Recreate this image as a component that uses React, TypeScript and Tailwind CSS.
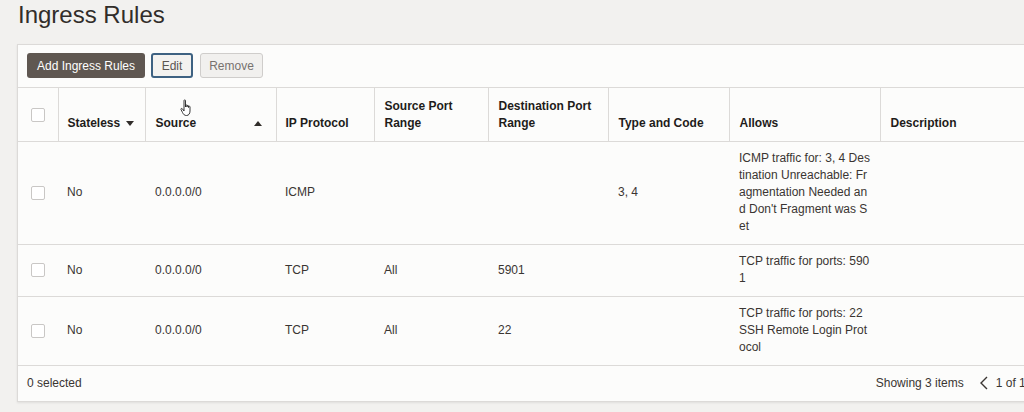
import React from "react";

const font = { fontFamily: '"Liberation Sans", Arial, sans-serif' };

type Row = {
  stateless: string;
  source: string;
  protocol: string;
  srcPort: string;
  dstPort: string;
  typeCode: string;
  allows: string[];
};

const rows: Row[] = [
  {
    stateless: "No",
    source: "0.0.0.0/0",
    protocol: "ICMP",
    srcPort: "",
    dstPort: "",
    typeCode: "3, 4",
    allows: [
      "ICMP traffic for: 3, 4 Des",
      "tination Unreachable: Fr",
      "agmentation Needed an",
      "d Don't Fragment was S",
      "et",
    ],
  },
  {
    stateless: "No",
    source: "0.0.0.0/0",
    protocol: "TCP",
    srcPort: "All",
    dstPort: "5901",
    typeCode: "",
    allows: ["TCP traffic for ports: 590", "1"],
  },
  {
    stateless: "No",
    source: "0.0.0.0/0",
    protocol: "TCP",
    srcPort: "All",
    dstPort: "22",
    typeCode: "",
    allows: ["TCP traffic for ports: 22", "SSH Remote Login Prot", "ocol"],
  },
];

const Checkbox = () => (
  <span className="block w-[14px] h-[14px] rounded-[2px] border border-[#c9c7c5] bg-white" />
);

const Caret = ({ up }: { up?: boolean }) => (
  <svg width="8" height="5" viewBox="0 0 8 5" className="inline-block">
    {up ? <path d="M0 5 L4 0 L8 5 Z" fill="#312d2a" /> : <path d="M0 0 L8 0 L4 5 Z" fill="#312d2a" />}
  </svg>
);

const th = "border-l border-[#dcdad8] px-[10px] pt-[8px] pb-[9px] align-bottom text-left font-bold leading-[17px] text-[#1f1c1a]";
const td = "px-[10px] py-[8.5px] align-middle leading-[17px] text-[#3a3532]";

export default function App() {
  return (
    <div className="w-[1024px] h-[412px] overflow-hidden bg-[#f2f1ef] relative" style={font}>
      <h1 className="pl-[18px] pt-[1px] text-[24px] leading-[28px] text-[#312d2a]">Ingress Rules</h1>
      <div className="ml-[17px] mt-[15px] w-[1040px] bg-[#fcfcfb] border border-[#dcdad8] shadow-[0_1px_2px_rgba(0,0,0,0.08)] text-[12px]">
        <div className="flex items-center px-[9px] pt-[8px] pb-[9px] border-b border-[#dcdad8]">
          <button className="h-[25px] w-[118px] rounded-[3px] bg-[#5f5751] text-white text-[12px]">Add Ingress Rules</button>
          <button className="ml-[6px] h-[25px] w-[42px] rounded-[3px] border-2 border-[#3e6282] bg-[#f3f2f0] text-[#5a5552] text-[12px]">Edit</button>
          <button className="ml-[7px] h-[25px] w-[63px] rounded-[3px] border border-[#cfcdcb] bg-[#f1f0ee] text-[#77726e] text-[12px]">Remove</button>
        </div>
        <table className="table-fixed border-collapse w-full">
          <colgroup>
            <col className="w-[40px]" />
            <col className="w-[87px]" />
            <col className="w-[131px]" />
            <col className="w-[98px]" />
            <col className="w-[114px]" />
            <col className="w-[120px]" />
            <col className="w-[121px]" />
            <col className="w-[151px]" />
            <col />
          </colgroup>
          <thead>
            <tr className="h-[53px] border-b border-[#dcdad8]">
              <th className="pl-[13px] pt-[20px] align-top">
                <Checkbox />
              </th>
              <th className={th + " pl-[9px]"}>
                <span className="inline-flex items-center gap-[6px]">
                  Stateless <Caret />
                </span>
              </th>
              <th className={th}>
                <span className="flex items-center justify-between pr-[4px]">
                  Source <Caret up />
                </span>
              </th>
              <th className={th + " pl-[9px]"}>IP Protocol</th>
              <th className={th}>
                Source Port
                <br />
                Range
              </th>
              <th className={th}>
                Destination Port
                <br />
                Range
              </th>
              <th className={th}>Type and Code</th>
              <th className={th}>Allows</th>
              <th className={th}>Description</th>
            </tr>
          </thead>
          <tbody>
            {rows.map((r, i) => (
              <tr key={i} className="border-b border-[#dcdad8]">
                <td className="pl-[13px] align-middle">
                  <Checkbox />
                </td>
                <td className={td + " pl-[9px]"}>{r.stateless}</td>
                <td className={td}>{r.source}</td>
                <td className={td + " pl-[9px]"}>{r.protocol}</td>
                <td className={td}>{r.srcPort}</td>
                <td className={td}>{r.dstPort}</td>
                <td className={td}>{r.typeCode}</td>
                <td className={td}>
                  {r.allows.map((l, j) => (
                    <div key={j} className="whitespace-nowrap">
                      {l}
                    </div>
                  ))}
                </td>
                <td className={td}></td>
              </tr>
            ))}
          </tbody>
        </table>
        <div className="h-[35px] flex items-center pl-[9px] text-[#3a3532]">
          <span>0 selected</span>
          <span className="ml-[794px]">Showing 3 items</span>
          <svg width="10" height="14" viewBox="0 0 10 14" className="ml-[15px]">
            <path d="M8 1 L2 7 L8 13" fill="none" stroke="#3a3532" strokeWidth="1.4" />
          </svg>
          <span className="ml-[7px] whitespace-nowrap">1 of 1</span>
        </div>
      </div>
      <svg width="14" height="18" viewBox="0 0 14 18" className="absolute left-[180px] top-[99px]">
        <path
          d="M4 1.5 C4 0.7 5.5 0.7 5.5 1.5 L5.5 8 L5.5 6.5 C5.5 5.7 7 5.7 7 6.5 L7 8 L7 7 C7 6.2 8.5 6.2 8.5 7 L8.5 8.5 L8.5 7.8 C8.5 7 10 7 10 7.8 L10 12 C10 14.5 8.8 16.5 6.5 16.5 C4.5 16.5 3.5 15.5 2.5 13.5 L1 10.5 C0.6 9.6 1.8 9 2.4 9.8 L4 12 Z"
          fill="#fff"
          stroke="#222"
          strokeWidth="0.9"
        />
      </svg>
    </div>
  );
}
